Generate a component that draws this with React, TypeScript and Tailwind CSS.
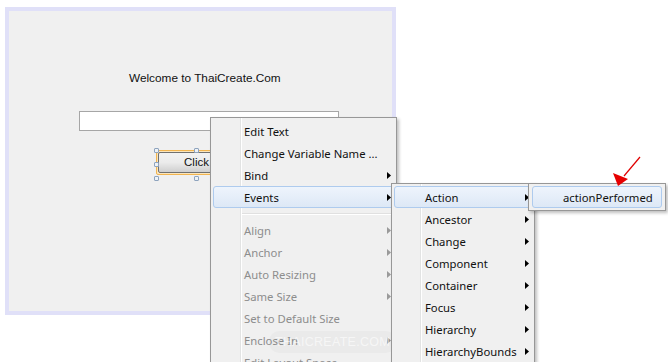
import React from "react";

const ui = { fontFamily: '"Noto Sans", "Open Sans", sans-serif' };
const tah = { fontFamily: '"Liberation Sans", Arial, sans-serif' };

function Arrow({ disabled }: { disabled?: boolean }) {
  return (
    <svg width="4" height="7" viewBox="0 0 4 7" className="shrink-0">
      <path d="M0 0 L4 3.5 L0 7 Z" fill={disabled ? "#9a9a9a" : "#000"} />
    </svg>
  );
}

type Item = { label: string; sub?: boolean; disabled?: boolean; hot?: boolean };

function MenuItem({ item, textLeft }: { item: Item; textLeft: string }) {
  return (
    <div className="relative h-[22px] flex items-center pr-[4px]">
      {item.hot && (
        <div className="absolute inset-y-0 left-[1px] right-[1px] rounded-[3px] border border-[#aecbee] bg-gradient-to-b from-[#eef4fc] to-[#dde8f6]" />
      )}
      <span
        className={`relative ${textLeft} pt-[2px] flex-1 text-[11.3px] leading-none whitespace-nowrap ${item.disabled ? "text-[#8d8d8d]" : "text-[#111]"}`}
      >
        {item.label}
      </span>
      {item.sub && (
        <span className="relative">
          <Arrow disabled={item.disabled} />
        </span>
      )}
    </div>
  );
}

function Handle() {
  return <div className="w-[5px] h-[5px] border border-[#8ea4be] bg-[#eef2f7] rounded-[1px]" />;
}

export default function App() {
  const main: Item[] = [
    { label: "Edit Text" },
    { label: "Change Variable Name ..." },
    { label: "Bind", sub: true },
    { label: "Events", sub: true, hot: true },
  ];
  const main2: Item[] = [
    { label: "Align", sub: true, disabled: true },
    { label: "Anchor", sub: true, disabled: true },
    { label: "Auto Resizing", sub: true, disabled: true },
    { label: "Same Size", sub: true, disabled: true },
    { label: "Set to Default Size", disabled: true },
    { label: "Enclose In", sub: true, disabled: true },
    { label: "Edit Layout Space", disabled: true },
  ];
  const events: Item[] = [
    { label: "Action", sub: true, hot: true },
    { label: "Ancestor", sub: true },
    { label: "Change", sub: true },
    { label: "Component", sub: true },
    { label: "Container", sub: true },
    { label: "Focus", sub: true },
    { label: "Hierarchy", sub: true },
    { label: "HierarchyBounds", sub: true },
  ];

  return (
    <div className="relative w-[668px] h-[362px] bg-white overflow-hidden" style={ui}>
      {/* Form */}
      <div className="ml-[5px] mt-[7px] w-[391px] h-[308px] border-4 border-[#e0e0f8] bg-[#f0f0f0] flex flex-col">
        <div className="mt-[61px] ml-[120px] h-[14px] flex items-center text-[11.8px] text-[#111] whitespace-nowrap" style={tah}>
          Welcome to ThaiCreate.Com
        </div>
        <div className="mt-[25px] ml-[70px] w-[260px] h-[20px] bg-white border border-[#a6a6a6]" />
        {/* selected button */}
        <div className="relative mt-[17px] ml-[145px] w-[85px] h-[34px]">
          <div className="absolute left-[2px] top-[2px] w-[80px] h-[25px] rounded-[2px] border border-[#f2b550] bg-[#fbe6bd] p-[1px]">
            <div className="w-full h-full rounded-[2px] border border-[#707070] bg-gradient-to-b from-[#f2f2f2] via-[#ebebeb] to-[#cfcfcf] flex items-center justify-center text-[11.5px] text-[#111]" style={tah}>
              <span className="ml-[1px]">Click</span>
            </div>
          </div>
          <div className="absolute left-0 top-0"><Handle /></div>
          <div className="absolute left-[40px] top-0"><Handle /></div>
          <div className="absolute left-0 top-[14px]"><Handle /></div>
          <div className="absolute left-0 top-[28px]"><Handle /></div>
          <div className="absolute left-[40px] top-[28px]"><Handle /></div>
        </div>
      </div>

      {/* Main context menu */}
      <div className="absolute left-[210px] top-[117px] w-[187px] h-[260px] border border-[#979797] bg-[#f0f0f0] shadow-[2px_2px_3px_rgba(0,0,0,0.25)] pt-[2px] px-[1px] flex flex-col">
        <div className="absolute top-0 bottom-0 left-[29px] w-px bg-[#e2e3e3]" />
        <div className="absolute top-0 bottom-0 left-[30px] w-px bg-white" />
        {main.map((it) => (
          <MenuItem key={it.label} item={it} textLeft="ml-[32px]" />
        ))}
        <div className="h-[11px] flex items-center pl-[30px] pr-[2px]">
          <div className="w-full">
            <div className="h-px bg-[#e0e0e0]" />
            <div className="h-px bg-white" />
          </div>
        </div>
        {main2.map((it) => (
          <MenuItem key={it.label} item={it} textLeft="ml-[32px]" />
        ))}
        {/* watermark */}
        <div className="absolute left-[58px] top-[213px] px-[6px] h-[22px] rounded-[10px] bg-black/[0.025] flex items-center text-[12.5px] tracking-[0.3px] text-white/60 whitespace-nowrap pointer-events-none" style={tah}>
          THAICREATE.COM
        </div>
      </div>

      {/* Events submenu */}
      <div className="absolute left-[391px] top-[183px] w-[144px] h-[190px] border border-[#979797] bg-[#f0f0f0] shadow-[2px_2px_3px_rgba(0,0,0,0.25)] pt-[2px] px-[1px] flex flex-col">
        <div className="absolute top-0 bottom-0 left-[28px] w-px bg-[#e2e3e3]" />
        <div className="absolute top-0 bottom-0 left-[29px] w-px bg-white" />
        {events.map((it) => (
          <MenuItem key={it.label} item={it} textLeft="ml-[32px]" />
        ))}
      </div>

      {/* Action submenu */}
      <div className="absolute left-[528px] top-[183px] w-[138px] h-[28px] border border-[#979797] bg-[#f0f0f0] shadow-[2px_2px_3px_rgba(0,0,0,0.25)] pt-[2px] px-[2px] flex flex-col">
        <MenuItem item={{ label: "actionPerformed", hot: true }} textLeft="ml-[32px]" />
      </div>

      {/* red arrow */}
      <svg className="absolute left-0 top-0 pointer-events-none" width="668" height="362">
        <line x1="640" y1="157" x2="624" y2="176" stroke="#e00000" strokeWidth="1.2" />
        <path d="M618 186 L613 173 L628 179 Z" fill="#e60000" />
      </svg>
    </div>
  );
}
